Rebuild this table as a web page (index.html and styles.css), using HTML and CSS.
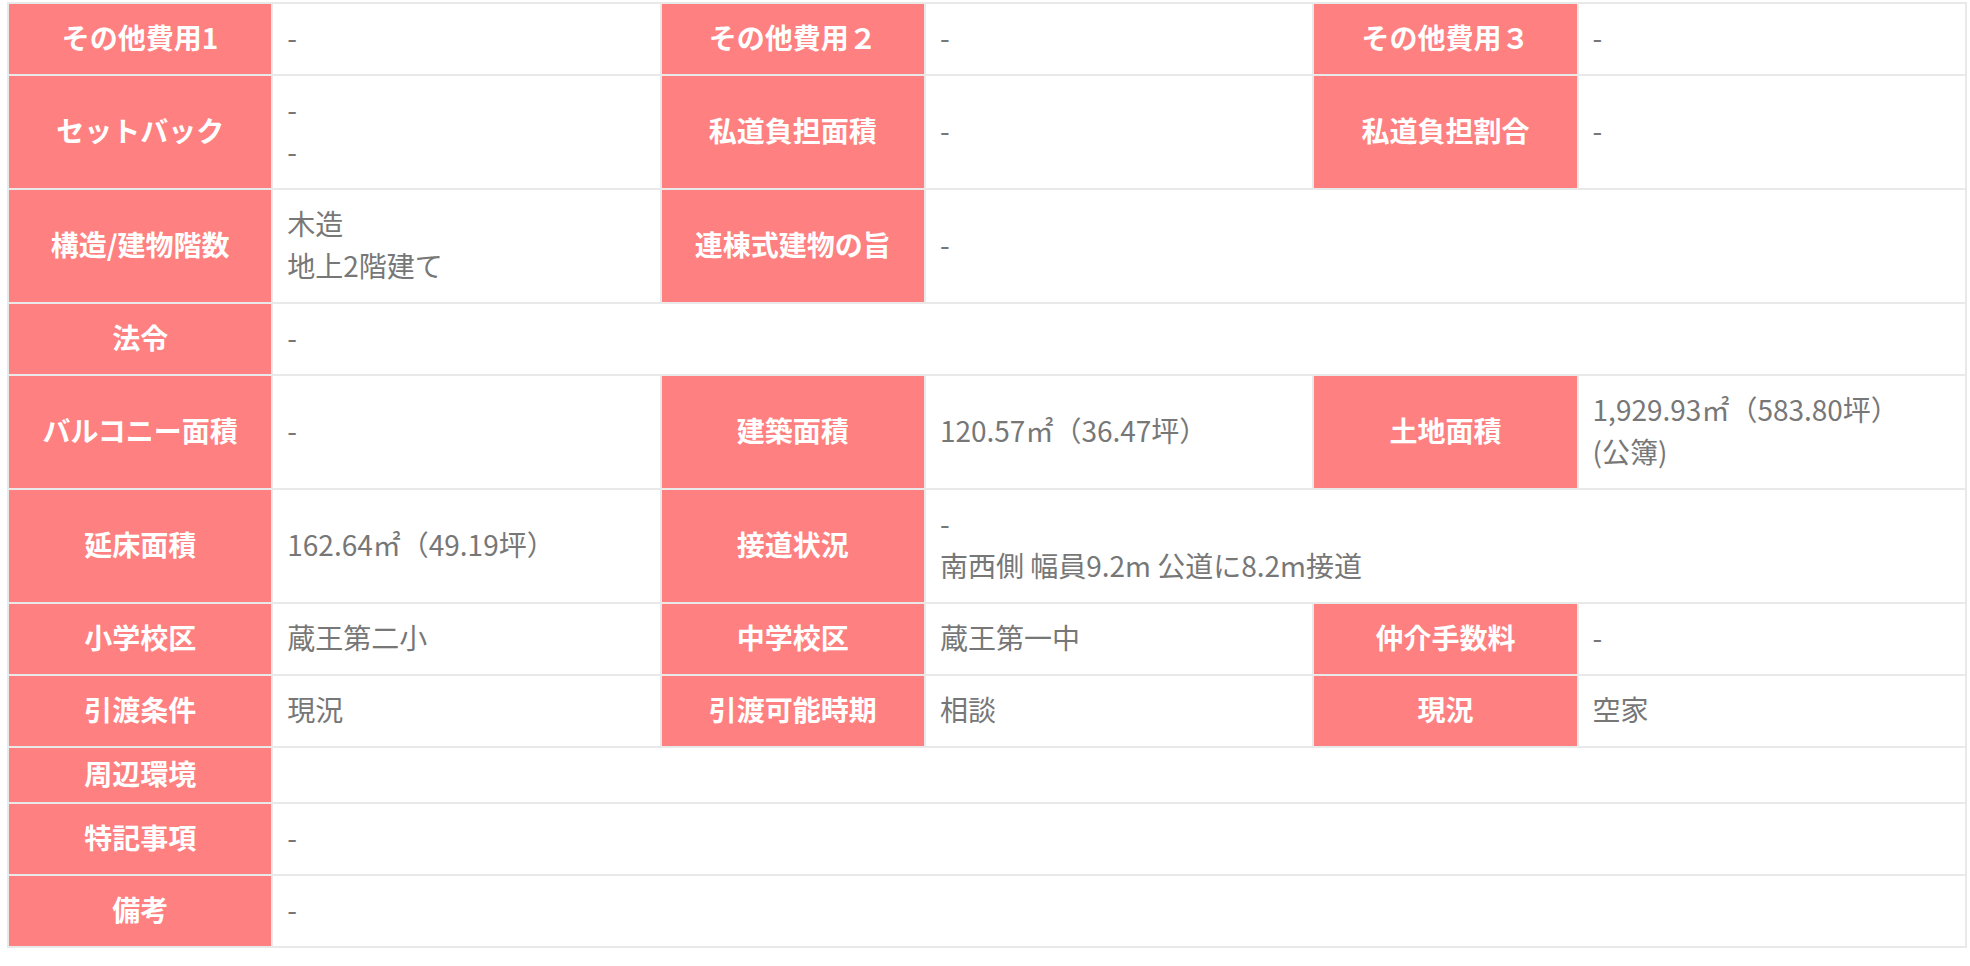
FILE: index.html
```html
<!DOCTYPE html>
<html lang="ja">
<head>
<meta charset="utf-8">
<title>物件概要</title>
<link rel="stylesheet" href="styles.css">
</head>
<body>
<div class="wrap">
<table class="spec">
  <colgroup>
    <col class="c-th"><col class="c-td"><col class="c-th"><col class="c-td"><col class="c-th"><col class="c-td">
  </colgroup>
  <tbody>
    <tr>
      <th>その他費用1</th><td>-</td>
      <th>その他費用２</th><td>-</td>
      <th>その他費用３</th><td>-</td>
    </tr>
    <tr>
      <th>セットバック</th><td>-<br>-</td>
      <th>私道負担面積</th><td>-</td>
      <th>私道負担割合</th><td>-</td>
    </tr>
    <tr>
      <th>構造/建物階数</th><td>木造<br>地上2階建て</td>
      <th>連棟式建物の旨</th><td colspan="3">-</td>
    </tr>
    <tr>
      <th>法令</th><td colspan="5">-</td>
    </tr>
    <tr>
      <th>バルコニー面積</th><td>-</td>
      <th>建築面積</th><td>120.57㎡（36.47坪）</td>
      <th>土地面積</th><td>1,929.93㎡（583.80坪）<br>(公簿)</td>
    </tr>
    <tr>
      <th>延床面積</th><td>162.64㎡（49.19坪）</td>
      <th>接道状況</th><td colspan="3">-<br>南西側 幅員9.2m 公道に8.2m接道</td>
    </tr>
    <tr>
      <th>小学校区</th><td>蔵王第二小</td>
      <th>中学校区</th><td>蔵王第一中</td>
      <th>仲介手数料</th><td>-</td>
    </tr>
    <tr>
      <th>引渡条件</th><td>現況</td>
      <th>引渡可能時期</th><td>相談</td>
      <th>現況</th><td>空家</td>
    </tr>
    <tr>
      <th>周辺環境</th><td colspan="5"></td>
    </tr>
    <tr>
      <th>特記事項</th><td colspan="5">-</td>
    </tr>
    <tr>
      <th>備考</th><td colspan="5">-</td>
    </tr>
  </tbody>
</table>
</div>
</body>
</html>
```

FILE: styles.css
```css
html, body {
  margin: 0;
  padding: 0;
  background: #ffffff;
}

body {
  font-family: "Noto Sans CJK JP", "Noto Sans", sans-serif;
  font-size: 28px;
  line-height: 42px;
  color: #777777;
}

.wrap {
  padding: 2px 0 0 7px;
}

.spec {
  table-layout: fixed;
  width: 1960px;
  border-collapse: collapse;
  border: 2px solid #e9e9e9;
}

.c-th { width: 264px; }
.c-td { width: 388px; }

.spec th,
.spec td {
  border: 2px solid #e9e9e9;
  vertical-align: middle;
}

.spec th {
  background: #ff8080;
  color: #ffffff;
  font-weight: 700;
  text-align: center;
  padding: 4px 8px 8px;
  white-space: nowrap;
}

.spec td {
  background: #ffffff;
  text-align: left;
  padding: 12px 14px 16px;
  font-weight: 400;
}
```
